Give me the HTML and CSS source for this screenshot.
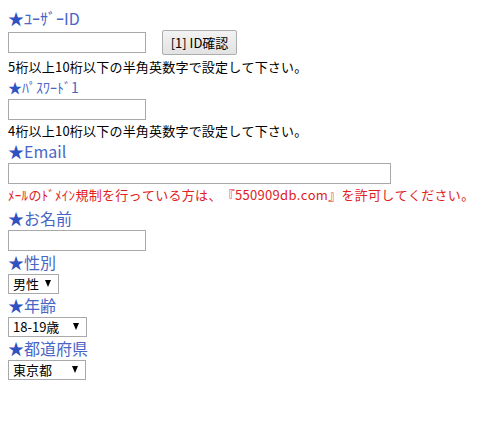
FILE: index.html
```html
<!DOCTYPE html>
<html lang="ja">
<head>
<meta charset="utf-8">
<title>登録フォーム</title>
<link rel="stylesheet" href="styles.css">
</head>
<body>
<form class="form">
  <div class="label l1"><span class="star">★</span>ﾕｰｻﾞｰID</div>
  <div class="row r1"><input class="text short" type="text"><button class="btn" type="button">[1] ID確認</button></div>
  <div class="hint h1">5桁以上10桁以下の半角英数字で設定して下さい。</div>

  <div class="label small"><span class="star">★</span>ﾊﾟｽﾜｰﾄﾞ1</div>
  <div class="row"><input class="text short" type="password"></div>
  <div class="hint">4桁以上10桁以下の半角英数字で設定して下さい。</div>

  <div class="label"><span class="star">★</span>Email</div>
  <div class="row"><input class="text long" type="text"></div>
  <div class="hint red">ﾒｰﾙのﾄﾞﾒｲﾝ規制を行っている方は、『550909db.com』を許可してください。</div>

  <div class="label"><span class="star">★</span>お名前</div>
  <div class="row"><input class="text short" type="text"></div>

  <div class="label"><span class="star">★</span>性別</div>
  <div class="row"><span class="sel w-sex"><select><option>男性</option><option>女性</option></select></span></div>

  <div class="label"><span class="star">★</span>年齢</div>
  <div class="row"><span class="sel w-age"><select><option>18-19歳</option><option>20-24歳</option></select></span></div>

  <div class="label"><span class="star">★</span>都道府県</div>
  <div class="row"><span class="sel w-pref"><select><option>東京都</option><option>大阪府</option></select></span></div>
</form>
</body>
</html>
```

FILE: styles.css
```css
html, body {
  margin: 0;
  padding: 0;
  background: #ffffff;
}
body {
  font-family: "Noto Sans CJK JP", "Liberation Sans", sans-serif;
  color: #000000;
  text-spacing-trim: space-all;
  font-kerning: none;
}
.form {
  display: flex;
  flex-direction: column;
  align-items: flex-start;
  padding: 7px 8px 0 8px;
}
.label {
  font-size: 16px;
  line-height: 22px;
  height: 22px;
  color: #4866c6;
  white-space: nowrap;
}
.label.small {
  font-size: 14px;
}
.star {
  color: #2f52c2;
}
.row {
  display: flex;
  align-items: center;
  gap: 16px;
  margin-top: 1px;
}
.r1 {
  height: 27px;
  margin-top: 0;
}
.text {
  box-sizing: border-box;
  height: 21px;
  border: 1px solid #a9a9a9;
  border-radius: 0;
  padding: 1px 2px;
  margin: 0;
  background: #fff;
  font: 13px "Noto Sans CJK JP", sans-serif;
  outline: none;
}
.short { width: 138px; }
.long { width: 383px; }
.btn {
  box-sizing: border-box;
  height: 25px;
  width: 75px;
  padding: 0;
  margin: 0;
  border: 1px solid #adadad;
  border-radius: 2px;
  background: linear-gradient(#f3f3f3, #e2e2e2);
  font: 13px/23px "Noto Sans CJK JP", "Liberation Sans", sans-serif;
  color: #000;
}
.hint {
  font-size: 13px;
  line-height: 18px;
  margin-top: 2px;
  letter-spacing: 0.2px;
  white-space: nowrap;
}
.hint.red {
  color: #e0211e;
  letter-spacing: 0.3px;
  margin-bottom: 3px;
}
.sel {
  position: relative;
  display: block;
  height: 20px;
}
.sel select {
  -webkit-appearance: none;
  appearance: none;
  display: block;
  box-sizing: border-box;
  height: 20px;
  width: 100%;
  margin: 0;
  padding: 0 0 0 4px;
  border: 1px solid #a9a9a9;
  border-radius: 0;
  background: #fff;
  color: #000;
  font: 13px/18px "Noto Sans CJK JP", sans-serif;
  outline: none;
}
.sel::after {
  content: "";
  position: absolute;
  right: 8px;
  top: 6px;
  width: 0;
  height: 0;
  border-left: 3.5px solid transparent;
  border-right: 3.5px solid transparent;
  border-top: 7px solid #000;
  pointer-events: none;
}
.w-sex { width: 51px; }
.w-age { width: 79px; }
.w-pref { width: 78px; }
```
